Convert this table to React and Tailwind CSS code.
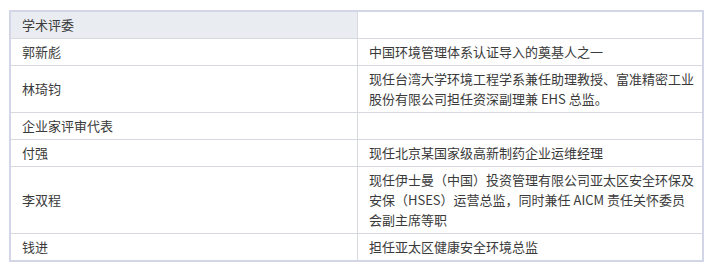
const rows = [
  { name: '学术评委', desc: '', head: true },
  { name: '郭新彪', desc: ['中国环境管理体系认证导入的奠基人之一'] },
  { name: '林琦钧', desc: ['现任台湾大学环境工程学系兼任助理教授、富准精密工业', '股份有限公司担任资深副理兼 EHS 总监。'] },
  { name: '企业家评审代表', desc: '' },
  { name: '付强', desc: ['现任北京某国家级高新制药企业运维经理'] },
  { name: '李双程', desc: ['现任伊士曼（中国）投资管理有限公司亚太区安全环保及', '安保（HSES）运营总监，同时兼任 AICM 责任关怀委员', '会副主席等职'] },
  { name: '钱进', desc: ['担任亚太区健康安全环境总监'] },
];

export default function App() {
  return (
    <div className="w-[720px] h-[271px] bg-white pt-[10px] pl-[9px]" style={{ fontFamily: '"Microsoft YaHei", "Noto Sans CJK SC", sans-serif' }}>
      <div className="w-[695px] border-2 border-[#d3d6e6] grid grid-cols-[347px_1fr] text-[13px] leading-[20px] text-[#3a3a3a]">
        {rows.map((row, i) => {
          const last = i === rows.length - 1;
          return (
            <div key={i} className="contents">
              <div className={`flex items-center pl-[11px] py-[3px] border-r border-[#d6d9e0] ${last ? '' : 'border-b'} ${row.head ? 'bg-[#e9ecf1]' : ''}`}>
                {row.name}
              </div>
              <div className={`pl-[11px] py-[3px] border-[#d6d9e0] ${last ? '' : 'border-b'}`}>
                {row.desc && row.desc.map((line, j) => <div key={j}>{line}</div>)}
              </div>
            </div>
          );
        })}
      </div>
    </div>
  );
}
